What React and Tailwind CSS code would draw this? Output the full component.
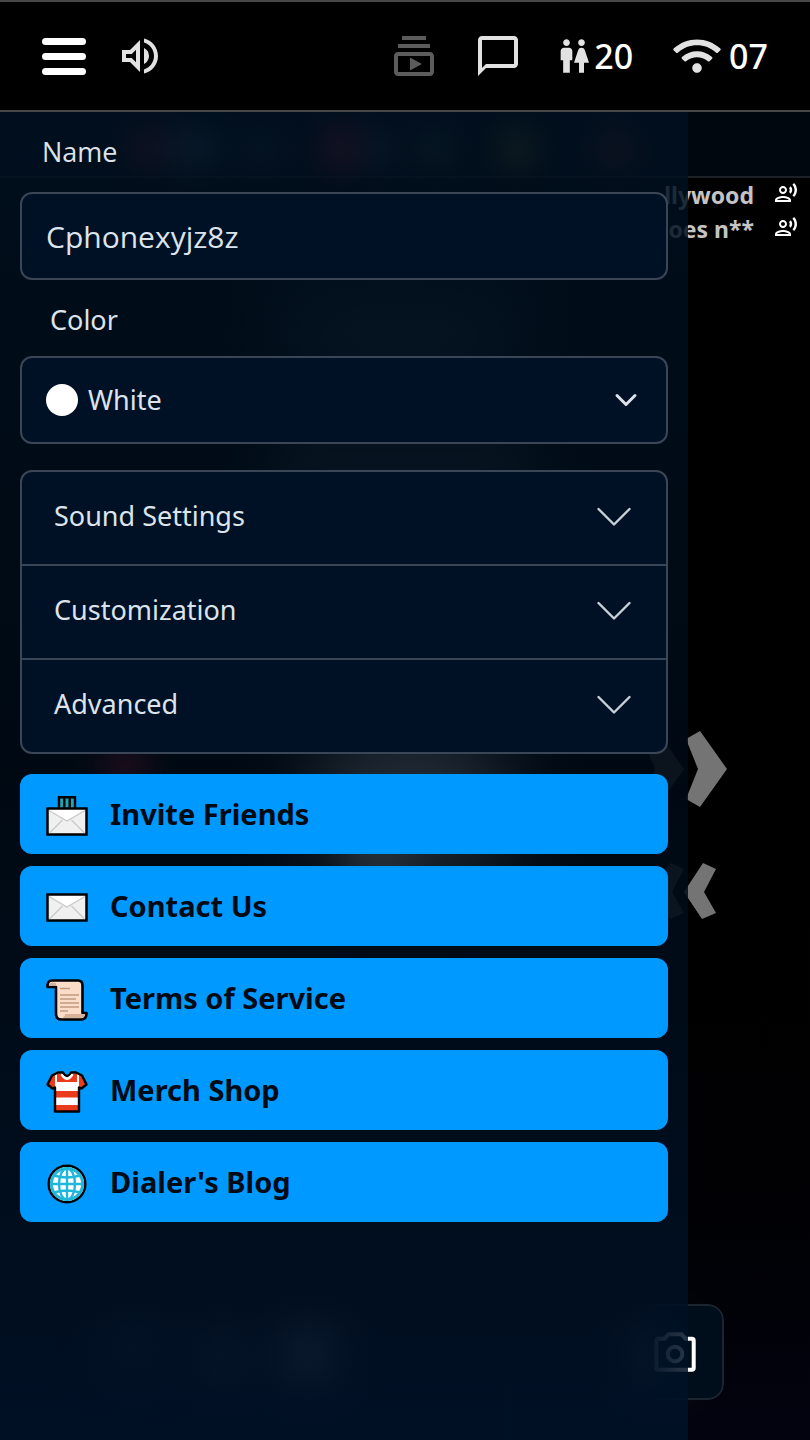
import { useState } from "react";
import { FaWifi } from "react-icons/fa";
import {
  MdOutlineChatBubbleOutline,
  MdOutlineRecordVoiceOver,
  MdOutlineSubscriptions,
  MdOutlineVolumeUp,
  MdWc,
} from "react-icons/md";

const sections = ["Sound Settings", "Customization", "Advanced"];

const messages = ["llywood", "toes n**"];

// soft lights of the room behind the menu
const glows = [
  "left-[125px] top-[16px] h-[40px] w-[50px] bg-[#a02038] blur-lg opacity-70",
  "left-[170px] top-[18px] h-[36px] w-[50px] bg-[#507080] blur-lg opacity-80",
  "left-[235px] top-[22px] h-[30px] w-[50px] bg-[#304050] blur-lg opacity-80",
  "left-[318px] top-[12px] h-[48px] w-[46px] bg-[#c01838] blur-lg opacity-80",
  "left-[362px] top-[20px] h-[34px] w-[30px] bg-[#506070] blur-lg opacity-80",
  "left-[415px] top-[18px] h-[36px] w-[40px] bg-[#506050] blur-lg opacity-80",
  "left-[497px] top-[16px] h-[42px] w-[40px] bg-[#808020] blur-lg opacity-80",
  "left-[595px] top-[16px] h-[42px] w-[40px] bg-[#803030] blur-lg opacity-80",
  "left-[280px] top-[180px] h-[90px] w-[240px] bg-[#304858] blur-2xl opacity-80",
  "left-[270px] top-[330px] h-[40px] w-[270px] bg-[#506070] blur-xl opacity-80",
  "left-[100px] top-[635px] h-[40px] w-[50px] bg-[#e01848] blur-lg",
  "left-[310px] top-[615px] h-[150px] w-[200px] bg-[#e8e8e8] blur-2xl",
  "left-[345px] top-[725px] h-[40px] w-[70px] bg-white blur-lg",
  "left-[110px] top-[1210px] h-[50px] w-[50px] bg-[#203030] blur-xl",
  "left-[205px] top-[1225px] h-[40px] w-[34px] bg-[#606870] blur-xl opacity-90",
  "left-[285px] top-[1218px] h-[46px] w-[46px] bg-[#98a0a8] blur-xl opacity-90",
  "left-[640px] top-[1220px] h-[46px] w-[40px] bg-[#90a0b0] blur-xl opacity-60",
];

const Envelope = () => (
  <>
    <path d="M1.5 13.5h39v26h-39z" fill="#f0f0f0" stroke="#000" strokeWidth="2.5" />
    <path d="M3 15h36L21 26z" fill="#fff" />
    <path
      d="M3 15.5 21 26l18-10.5M3.5 38 16.5 25M38.5 38 25.5 25"
      fill="none"
      stroke="#c8c8c8"
      strokeWidth="1.2"
    />
  </>
);

function InviteIcon() {
  return (
    <svg viewBox="0 0 42 42" className="size-[42px] shrink-0" aria-hidden="true">
      <path d="M12.5 2h17v12h-17z" fill="#1ca6b8" />
      <path
        d="M13 14V2.2h16V14M18.3 2v12M23.7 2v12"
        fill="none"
        stroke="#000"
        strokeWidth="2.4"
      />
      <Envelope />
    </svg>
  );
}

function ContactIcon() {
  return (
    <svg viewBox="0 6 42 42" className="size-[42px] shrink-0" aria-hidden="true">
      <Envelope />
    </svg>
  );
}

function ScrollIcon() {
  return (
    <svg viewBox="0 0 42 42" className="size-[42px] shrink-0" aria-hidden="true">
      <path
        d="M6 1.5h26q4.5 0 4.5 5V34h4q0 6.500-5.500 6.500H15q-5 0-5-6V8H1.500Q1.200 1.500 6 1.500z"
        fill="#fadcc8"
        stroke="#000"
        strokeWidth="2.6"
        strokeLinejoin="round"
      />
      <path d="M3 6.500h7V4Q4 2 3 6.500zM19 35h20q-.5 4-4 4H16q3-1 3-4z" fill="#d8b198" />
      <path
        d="M14 9.500h10M14 16h19M14 20h16M14 24h19M14 28h19M14 32h8"
        stroke="#c09a80"
        strokeWidth="1.3"
      />
    </svg>
  );
}

function ShirtIcon() {
  return (
    <svg viewBox="0 0 42 42" className="size-[42px] shrink-0" aria-hidden="true">
      <path
        d="M12 1.500h5q4 7 8 0h5l6 3 4.500 9-5 4-2.500-1v24H9v-24l-2.500 1-5-4 4.500-9z"
        fill="#fff"
      />
      <path
        d="M2 13 6 4.500l3-2v14l-2.500.5zM40 13l-4-8.500-3-2v14l2.500.5zM11 2.500h3.500q6.500 11 13 0H31V11H11zM10 20h22v6.500H10zM10 34h22v6H10z"
        fill="#ea3b1c"
      />
      <path
        d="M12 1.500h5q4 7 8 0h5l6 3 4.500 9-5 4-2.500-1v24H9v-24l-2.500 1-5-4 4.500-9z"
        fill="none"
        stroke="#000"
        strokeWidth="2.4"
        strokeLinejoin="round"
      />
      <path d="M15.500 3.500q5.500 9 11 0" fill="none" stroke="#fff" strokeWidth="2.2" />
    </svg>
  );
}

function GlobeIcon() {
  return (
    <svg viewBox="0 0 42 42" className="size-[42px] shrink-0" aria-hidden="true">
      <circle cx="21" cy="21" r="18.3" fill="#fff" stroke="#000" strokeWidth="2.4" />
      <circle cx="21" cy="21" r="15.6" fill="#fff" stroke="#1fb8dc" strokeWidth="3" />
      <g fill="none" stroke="#1fb8dc" strokeWidth="2.4">
        <ellipse cx="21" cy="21" rx="8" ry="15.5" />
        <path d="M21 5v32M5 21h32M8 12.500q13 4 26 0M8 29.500q13-4 26 0" />
      </g>
    </svg>
  );
}

const links = [
  { label: "Invite Friends", Icon: InviteIcon },
  { label: "Contact Us", Icon: ContactIcon },
  { label: "Terms of Service", Icon: ScrollIcon },
  { label: "Merch Shop", Icon: ShirtIcon },
  { label: "Dialer's Blog", Icon: GlobeIcon },
];

function Header() {
  return (
    <header className="flex h-28 items-center justify-between border-y-2 border-[#484848] bg-black px-[42px] text-[#e2e2e2]">
      <div className="flex items-center gap-[30px]">
        <button aria-label="Menu" className="flex w-11 flex-col gap-2">
          <span className="h-[7px] rounded-full bg-white" />
          <span className="h-[7px] rounded-full bg-white" />
          <span className="h-[7px] rounded-full bg-white" />
        </button>
        <button aria-label="Sound">
          <MdOutlineVolumeUp className="size-12" />
        </button>
      </div>
      <div className="flex items-center gap-8">
        <div className="flex items-center gap-9">
          <button aria-label="Videos" className="text-[#5c5c5c]">
            <MdOutlineSubscriptions className="size-12" />
          </button>
          <button aria-label="Chat">
            <MdOutlineChatBubbleOutline className="size-12" />
          </button>
        </div>
        <div className="flex items-center gap-10 font-medium">
          <div className="flex items-center">
            <MdWc className="size-10" />
            <span className="text-[34px] leading-10 text-white">20</span>
          </div>
          <div className="flex items-center gap-2">
            <FaWifi className="h-[38px] w-12" />
            <span className="text-[34px] leading-10 text-white">07</span>
          </div>
        </div>
      </div>
    </header>
  );
}

function Room() {
  return (
    <div className="relative flex flex-col overflow-hidden bg-linear-to-b from-black from-50% to-[#02030f] [grid-area:1/1]">
      <div className="h-[66px] border-b-2 border-[#1c2228] bg-[#01070f]" />
      {glows.map((glow) => (
        <div key={glow} className={`absolute rounded-full ${glow}`} />
      ))}
      <ul className="relative pr-3">
        {messages.map((text) => (
          <li key={text} className="flex h-[34px] items-center justify-end gap-5">
            <span className="text-[23px] font-bold text-[#c4c4c4]">{text}</span>
            <MdOutlineRecordVoiceOver className="mb-1 size-6 text-white" />
          </li>
        ))}
      </ul>
      <div className="relative mt-[485px] flex flex-col items-end gap-14 pr-[82px] text-[#747474]">
        <button aria-label="Next">
          <svg viewBox="0 0 92 76" className="h-[76px] w-[92px]" fill="currentColor">
            <path d="M50 8 64 0 91 38 64 76 50 68 62 38z" />
            <path d="M7 8 21 0 48 38 21 76 7 68 19 38z" opacity=".6" />
          </svg>
        </button>
        <button aria-label="Previous">
          <svg viewBox="0 0 92 56" className="h-[56px] w-[92px]" fill="currentColor">
            <path d="M67 0 80 6 68 29 80 50 66 56 48 29z" />
            <path d="M35 0 48 6 36 29 48 50 34 56 16 29z" opacity=".6" />
          </svg>
        </button>
      </div>
      <div className="relative mt-auto flex justify-end pb-10 pr-[86px]">
        <button
          aria-label="Camera"
          className="flex size-24 items-center justify-center rounded-2xl border-2 border-[#1b2530] bg-[#000d1b] text-white [mask-image:linear-gradient(to_right,transparent_15%,black_60%)]"
        >
          <svg
            viewBox="0 -2 48 48"
            className="size-12"
            fill="none"
            stroke="currentColor"
            strokeWidth="4"
            strokeLinejoin="round"
          >
            <path d="M6 8.700h6.500L16.500 4.300h13l4 4.400H40q1.700 0 1.700 1.700V38q0 1.700-1.700 1.700H6q-1.700 0-1.700-1.700V10.400Q4.300 8.700 6 8.700z" />
            <circle cx="23" cy="24" r="7.3" />
          </svg>
        </button>
      </div>
    </div>
  );
}

function ColorSelect() {
  return (
    <div className="relative">
      <select
        id="color"
        defaultValue="White"
        className="h-[88px] w-full appearance-none rounded-xl border-2 border-[#3a4655] bg-[#001126] pl-[66px] text-[27px] text-[#dde3ea]"
      >
        <option>White</option>
      </select>
      <span className="pointer-events-none absolute inset-y-0 left-[26px] my-auto size-8 rounded-full bg-white" />
      <svg
        viewBox="0 0 24 14"
        className="pointer-events-none absolute inset-y-0 right-[30px] my-auto h-[14px] w-6"
        fill="none"
        stroke="#dde3ea"
        strokeWidth="3"
        strokeLinecap="round"
        strokeLinejoin="round"
      >
        <path d="m3 2.500 9 9 9-9" />
      </svg>
    </div>
  );
}

function Accordion() {
  const [open, setOpen] = useState(null);

  return (
    <div className="mt-[26px] divide-y-2 divide-[#3a4655] rounded-xl border-2 border-[#3a4655] bg-[#001126]">
      {sections.map((title) => (
        <button
          key={title}
          aria-expanded={open === title}
          onClick={() => setOpen(open === title ? null : title)}
          className="flex h-[94px] w-full items-center justify-between pb-1 pl-8 pr-[34px] text-[27px] last:h-[92px]"
        >
          {title}
          <svg
            viewBox="0 -2 36 20"
            className="h-5 w-9"
            fill="none"
            stroke="#c8d0d8"
            strokeWidth="2.4"
            strokeLinecap="round"
            strokeLinejoin="round"
          >
            <path d="m2.500 1 15.500 15.500 15.500-15.500" />
          </svg>
        </button>
      ))}
    </div>
  );
}

function Menu() {
  const [name, setName] = useState("Cphonexyjz8z");

  return (
    <aside className="relative w-[84.9%] bg-linear-to-b from-[#001020]/85 via-[#000b16]/85 to-[#001228]/85 p-5 text-[#dde3ea] [grid-area:1/1]">
      <label
        htmlFor="name"
        className="mb-5 block pl-[22px] font-['Open_Sans',sans-serif] text-[27px] leading-10"
      >
        Name
      </label>
      <input
        id="name"
        value={name}
        onChange={(e) => setName(e.target.value)}
        className="block h-[88px] w-full rounded-xl border-2 border-[#3a4655] bg-[#001126] px-6 font-['Open_Sans',sans-serif] text-[30px]"
      />
      <label htmlFor="color" className="mb-4 mt-5 block pl-[30px] text-[27px] leading-10">
        Color
      </label>
      <ColorSelect />
      <Accordion />
      <nav className="mt-5 flex flex-col gap-3">
        {links.map(({ label, Icon }) => (
          <a
            key={label}
            href="#"
            className="flex h-20 items-center gap-[22px] rounded-xl bg-[#0099ff] pl-[26px] text-[29px] font-bold text-[#000a14]"
          >
            <span className="pt-1">
              <Icon />
            </span>
            {label}
          </a>
        ))}
      </nav>
    </aside>
  );
}

export default function App() {
  return (
    <div className="flex min-h-screen flex-col bg-black font-['Noto_Sans',sans-serif]">
      <Header />
      <main className="grid flex-1">
        <Room />
        <Menu />
      </main>
    </div>
  );
}
